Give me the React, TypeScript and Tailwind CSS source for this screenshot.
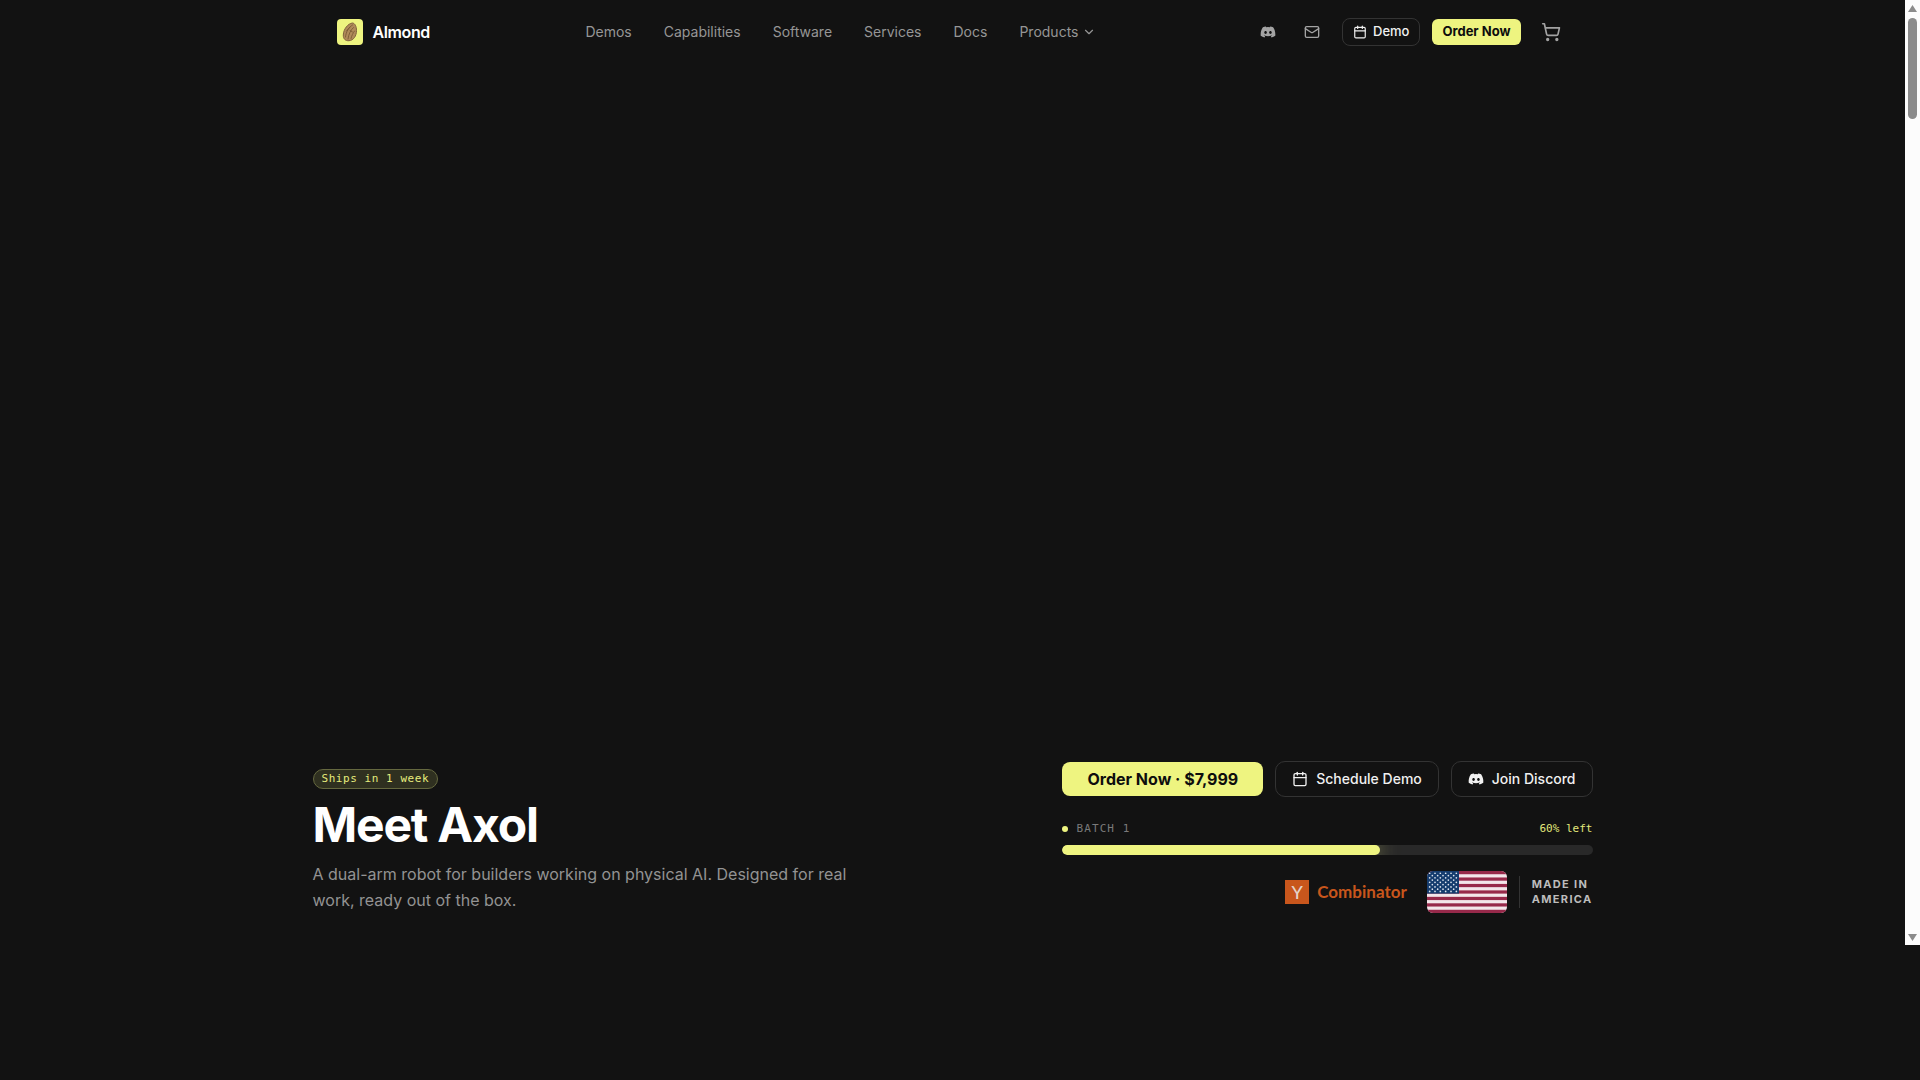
import { Calendar, ChevronDown, Mail, ShoppingCart } from "lucide-react";
import { FaDiscord } from "react-icons/fa";

const navLinks = ["Demos", "Capabilities", "Software", "Services", "Docs"];

const stripes = [0, 2, 4, 6, 8, 10, 12];
const starRows = [0, 1, 2, 3, 4, 5, 6, 7, 8];

function AlmondLogo() {
  return (
    <span className="flex size-[26px] items-center justify-center rounded bg-[#eef480]">
      <svg width="18" height="22" viewBox="0 0 18 22" fill="none" aria-hidden="true">
        <path d="M11.500 2C7 2.500 2.500 8 2.300 14C2.200 18 4.500 20 8 19.700C12.500 19.400 15.500 15 15.500 9.500C15.500 5.500 14 2.300 11.500 2Z" fill="#b08a5a" stroke="#80603c" strokeWidth="1" />
        <path d="M11.500 4C8 6 5 10.500 4.500 16M12.500 6.500C10 8.500 7.500 13 7 18M13.500 10C12 12 10.500 15 10 17.500M9 6L5.500 10M11.500 11L9 9.500" stroke="#7b5a36" strokeWidth="0.900" strokeLinecap="round" />
      </svg>
    </span>
  );
}

function Flag() {
  return (
    <svg className="h-[42px] w-20 rounded-md" viewBox="0 0 190 100" preserveAspectRatio="none" role="img" aria-label="United States flag">
      <rect width="190" height="100" fill="#f3e6ea" />
      {stripes.map((s) => (
        <rect key={s} y={(s * 100) / 13} width="190" height={100 / 13} fill="#97294a" />
      ))}
      <rect width="76" height="53.850" fill="#153c6e" />
      {starRows.map((r) =>
        Array.from({ length: r % 2 ? 5 : 6 }, (_, c) => (
          <circle key={`${r}-${c}`} cx={(r % 2 ? 12.670 : 6.330) + c * 12.670} cy={5.400 + r * 5.400} r="2" fill="#dfe6f0" />
        ))
      )}
    </svg>
  );
}

function Header() {
  return (
    <header className="mx-auto flex h-16 w-full max-w-7xl items-center justify-between px-6">
      <a href="#" className="flex items-center gap-2.5 text-base font-semibold tracking-tight text-white">
        <AlmondLogo />
        Almond
      </a>
      <nav className="flex items-center gap-8 text-sm text-[#969696]">
        {navLinks.map((label) => (
          <a key={label} href="#">{label}</a>
        ))}
        <button type="button" className="flex items-center gap-1">
          Products <ChevronDown size={14} strokeWidth={2} />
        </button>
      </nav>
      <div className="flex items-center gap-3">
        <div className="flex items-center gap-3 pr-0.5 text-[#a3a3a3]">
          <a href="#" aria-label="Discord" className="flex size-8 items-center justify-center"><FaDiscord size={16} /></a>
          <a href="#" aria-label="Email" className="flex size-8 items-center justify-center"><Mail size={16} strokeWidth={2} /></a>
        </div>
        <a href="#" className="flex h-7 items-center gap-1.5 rounded-lg border border-[#333] px-2.5 text-[13px] font-medium text-[#f0f0f0]">
          <Calendar size={14} strokeWidth={2} /> Demo
        </a>
        <button type="button" className="h-[26px] rounded-md bg-[#eef480] px-2.5 text-[13px] font-bold text-[#0d0d0d]">Order Now</button>
        <button type="button" aria-label="Cart" className="flex size-9 items-center justify-center text-[#a3a3a3]"><ShoppingCart size={20} strokeWidth={2} /></button>
      </div>
    </header>
  );
}

function BatchProgress({ left }: { left: number }) {
  return (
    <div>
      <div className="flex items-center justify-between font-['DejaVu_Sans_Mono',monospace] text-[11px] leading-4">
        <span className="flex items-center gap-2 tracking-widest text-[#7a7a7a]">
          <span className="size-1.5 rounded-full bg-[#eef480]" />
          BATCH 1
        </span>
        <span className="text-[#e2e87c]">{left}% left</span>
      </div>
      <div className="mt-2 h-2.5 overflow-hidden rounded-full bg-[#292929]">
        <div className="h-full rounded-full bg-[#eef480] shadow-[0_0_20px_rgba(238,244,128,0.6)]" style={{ width: `${left}%` }} />
      </div>
    </div>
  );
}

function Hero() {
  return (
    <section className="mx-auto flex w-full max-w-7xl flex-1 items-end justify-between pb-8">
      <div className="max-w-[576px]">
        <span className="inline-flex h-5 items-center rounded-full border border-[#65683f] bg-[#2f3020] px-2 font-['DejaVu_Sans_Mono',monospace] text-[11px] tracking-wider text-[#e6ec7d]">Ships in 1 week</span>
        <h1 className="mt-3 text-5xl font-bold tracking-tight text-white">Meet Axol</h1>
        <p className="mt-3 text-base leading-[26px] text-[#939393]">
          A dual-arm robot for builders working on physical AI. Designed for real work, ready out of the box.
        </p>
      </div>
      <div>
        <div className="flex items-center gap-3">
          <button type="button" className="h-[34px] rounded-lg bg-[#eef480] px-[25px] text-base font-bold text-[#0d0d0d]">Order Now · $7,999</button>
          <a href="#" className="flex h-9 items-center gap-2 rounded-[10px] border border-[#333] px-4 text-sm font-medium text-[#f0f0f0]">
            <Calendar size={16} strokeWidth={2} /> Schedule Demo
          </a>
          <a href="#" className="flex h-9 items-center gap-2 rounded-[10px] border border-[#333] px-4 text-sm font-medium text-[#f0f0f0]">
            <FaDiscord size={16} /> Join Discord
          </a>
        </div>
        <div className="mt-6">
          <BatchProgress left={60} />
        </div>
        <div className="mt-4 flex items-center justify-end gap-5">
          <div className="flex items-center gap-2 font-['Lato',sans-serif] text-[17px] font-bold text-[#c8561c]">
            <span className="flex size-6 items-center justify-center bg-[#c8561c] text-lg font-medium text-[#e5d3c8]">Y</span>
            Combinator
          </div>
          <div className="flex items-center gap-3">
            <Flag />
            <div className="h-8 border-l border-[#333] pt-px pl-3 text-[11px] leading-[15px] font-bold tracking-[0.12em] text-[#bdbdbd]">
              MADE IN
              <br />
              AMERICA
            </div>
          </div>
        </div>
      </div>
    </section>
  );
}

function Scrollbar() {
  return (
    <div className="flex w-[15px] flex-col items-center justify-between bg-[#fcfcfc]" aria-hidden="true">
      <div className="flex flex-col items-center gap-1.5 pt-[5px]">
        <svg width="9" height="7" viewBox="0 0 9 7"><path d="M4.500 0L9 7H0Z" fill="#8b8b8b" /></svg>
        <div className="h-[101px] w-[9px] rounded-full bg-[#8b8b8b]" />
      </div>
      <svg className="mb-1" width="9" height="7" viewBox="0 0 9 7"><path d="M0 0H9L4.500 7Z" fill="#8b8b8b" /></svg>
    </div>
  );
}

export default function App() {
  return (
    <div className="min-h-screen bg-[#121212] font-['Inter',sans-serif]">
      <div className="flex min-h-[87.5vh]">
        <main className="flex min-w-0 flex-1 flex-col">
          <Header />
          <Hero />
        </main>
        <Scrollbar />
      </div>
    </div>
  );
}
